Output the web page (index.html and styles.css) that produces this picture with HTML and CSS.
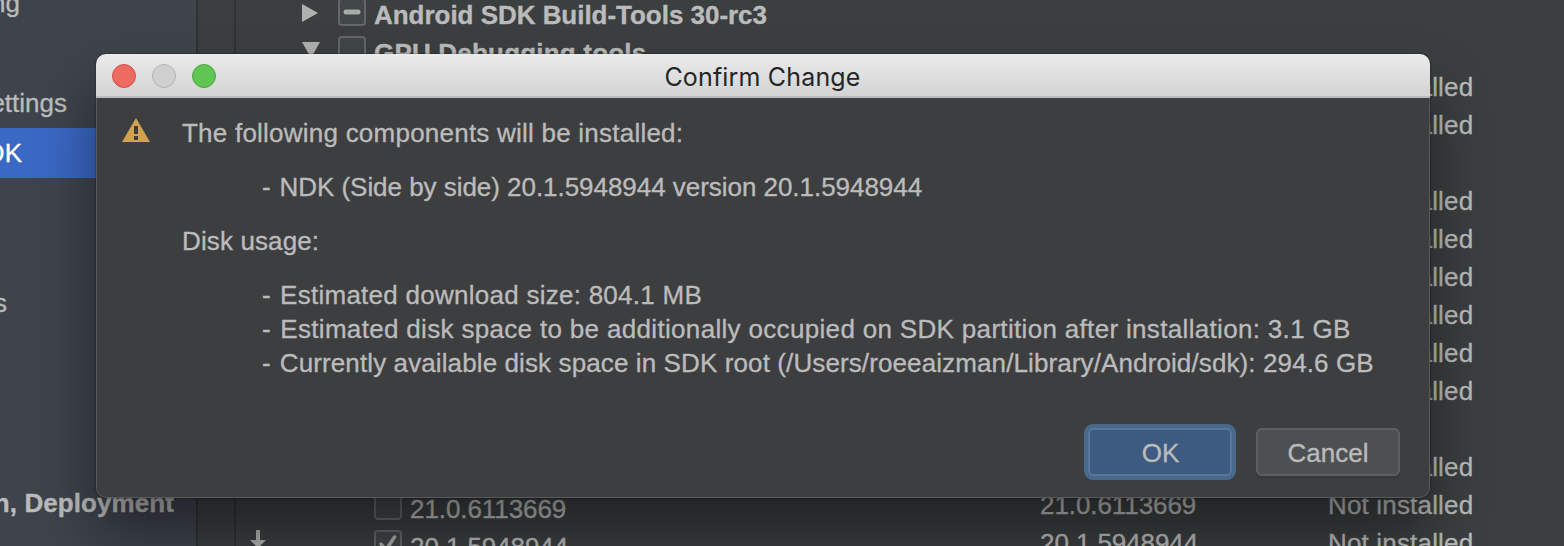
FILE: index.html
```html
<!DOCTYPE html>
<html lang="en">
<head>
<meta charset="utf-8">
<title>Confirm Change</title>
<link rel="stylesheet" href="styles.css">
</head>
<body>
<div class="screen">
  <nav class="sidebar">
    <div class="nav-item first"><span>Updating</span></div>
    <div class="nav-item settings"><span>System Settings</span></div>
    <div class="nav-item selected"><span>Android SDK</span></div>
    <div class="nav-item plain"><span>Path Variables</span></div>
    <div class="nav-item strong"><span>Build, Execution, Deployment</span></div>
  </nav>
  <div class="gutter"></div>
  <main class="table">
    <div class="row">
      <div class="name group"><svg class="arrow" width="18" height="18" viewBox="0 0 18 18"><path d="M0 0L16 9L0 18Z"/></svg><i class="box"><svg width="28" height="28" viewBox="0 0 28 28"><path class="mark" d="M8 14H20" stroke-width="5"/></svg></i><b class="n1">Android SDK Build-Tools 30-rc3</b></div>
    </div>
    <div class="row">
      <div class="name group"><svg class="arrow" width="18" height="18" viewBox="0 0 18 18"><path d="M0 0H18L9 16Z"/></svg><i class="box"></i><b class="n2">GPU Debugging tools</b></div>
    </div>
    <div class="row"><span class="status">Not installed</span></div>
    <div class="row"><span class="status">Not installed</span></div>
    <div class="row"></div>
    <div class="row"><span class="status">Not installed</span></div>
    <div class="row"><span class="status">Not installed</span></div>
    <div class="row"><span class="status">Not installed</span></div>
    <div class="row"><span class="status">Not installed</span></div>
    <div class="row"><span class="status">Not installed</span></div>
    <div class="row"><span class="status">Not installed</span></div>
    <div class="row"></div>
    <div class="row"><span class="status">Not installed</span></div>
    <div class="row">
      <div class="name child"><i class="box"></i><span class="label">21.0.6113669</span></div>
      <span class="version">21.0.6113669</span><span class="status">Not installed</span>
    </div>
    <div class="row">
      <div class="name child"><svg class="download" width="16" height="18" viewBox="0 0 16 18"><path d="M6 0H10V10H16L8 18L0 10H6Z"/></svg><i class="box"><svg width="28" height="28" viewBox="0 0 28 28"><path class="mark" d="M7 14L12 20L20.500 7" stroke-width="3.500"/></svg></i><span class="label">20.1.5948944</span></div>
      <span class="version">20.1.5948944</span><span class="status">Not installed</span>
    </div>
  </main>
  <section class="dialog">
    <header class="titlebar">
      <div class="lights"><i class="red"></i><i class="grey"></i><i class="green"></i></div>
      <h1><span>Confirm Change</span></h1>
    </header>
    <div class="content">
      <svg class="warning" width="28" height="24" viewBox="0 0 28 24"><path fill="#d0a251" d="M14 0L28 24H0Z"/><path fill="#3d3e40" d="M12 8H16V16H12ZM12 18H16V22H12Z"/></svg>
      <div class="message">
        <p><span class="l1">The following components will be installed:</span></p>
        <ul><li><span class="l2"><span class="dash">- </span>NDK (Side by side) 20.1.5948944 version 20.1.5948944</span></li></ul>
        <p><span class="l3">Disk usage:</span></p>
        <ul>
          <li><span class="l4"><span class="dash">- </span>Estimated download size: 804.1 MB</span></li>
          <li><span class="l5"><span class="dash">- </span>Estimated disk space to be additionally occupied on SDK partition after installation: 3.1 GB</span></li>
          <li><span class="l6"><span class="dash">- </span>Currently available disk space in SDK root (/Users/roeeaizman/Library/Android/sdk): 294.6 GB</span></li>
        </ul>
      </div>
    </div>
    <footer class="buttons"><button class="ok">OK</button><button class="cancel">Cancel</button></footer>
  </section>
</div>
</body>
</html>
```
FILE: styles.css
```css
* { box-sizing: border-box; }
body { margin: 0; background: #3b3f40; }
.screen {
  position: relative; display: flex; width: 1564px; height: 546px; overflow: hidden;
  font: 26px/38px "Liberation Sans", Arial, sans-serif; color: #bbb; white-space: nowrap;
  -webkit-text-stroke: .35px currentColor;
}
.sidebar { width: 196px; background: #3e434c; display: flex; flex-direction: column; }
.nav-item { display: flex; justify-content: flex-end; height: 50px; line-height: 50px; flex: none; }
.first { margin-top: -22px; padding-right: 176px; }
.settings { margin-top: 50px; padding-right: 129px; }
.selected { background: #3a68c5; color: #fff; padding-right: 174px; }
.plain { margin-top: 100px; padding-right: 189px; }
.strong { margin-top: 150px; padding-right: 22px; font-weight: bold; letter-spacing: .08px; }
.gutter { width: 40px; border: solid #2f3132; border-width: 0 2px; }
.table { flex: 1; display: flex; flex-direction: column; margin-top: -7px; }
.row { display: grid; grid-template-columns: 804px 288px 1fr; height: 38px; flex: none; }
.name { display: flex; align-items: center; grid-column: 1; height: 38px; }
.group { padding-left: 66px; }
.child { padding-left: 138px; position: relative; }
.version { grid-column: 2; line-height: 37px; letter-spacing: -.08px; }
.status { grid-column: 3; line-height: 37px; letter-spacing: .17px; }
.arrow { fill: #b0b0b0; margin-right: 18px; margin-top: 2px; }
.name b, .label { padding-top: 6px; }
.n1 { letter-spacing: -.03px; }
.n2 { letter-spacing: .2px; }
.label { letter-spacing: -.08px; }
.box { width: 28px; height: 28px; border: 2px solid #656768; border-radius: 4px; background: #414647; margin-right: 8px; flex: none; }
.box svg { display: block; margin: -2px; }
.mark { fill: none; stroke: #aaa; stroke-linecap: round; stroke-linejoin: round; }
.download { position: absolute; left: 14px; top: 5px; fill: #b0b0b0; }
.dialog {
  position: absolute; left: 96px; top: 54px; width: 1334px; height: 444px;
  display: flex; flex-direction: column; overflow: hidden;
  background: #3d3e40; border-radius: 10px;
  box-shadow: 0 0 2px rgba(0,0,0,.6), 0 34px 60px rgba(0,0,0,.45);
}
.dialog::after { content: ""; position: absolute; inset: 44px 0 0; border: 1px solid #58595b; border-top: 0; border-radius: 0 0 10px 10px; pointer-events: none; }
.titlebar { height: 44px; flex: none; display: flex; align-items: center; background: linear-gradient(#ebebeb, #d3d3d3); border-bottom: 2px solid #bcbdbe; }
.lights { display: flex; gap: 16px; padding-left: 16px; width: 160px; margin-top: 2px; }
.lights i { width: 24px; height: 24px; border-radius: 50%; border: 1px solid; }
.red { background: #ed6b60; border-color: #d35047 !important; }
.grey { background: #d0d0d0; border-color: #b2b2b2 !important; }
.green { background: #61c554; border-color: #4da73d !important; }
h1 { margin: 3px 161px 0 0; flex: 1; text-align: center; font: 400 25px/40px Inter, Roboto, sans-serif; color: #262626; -webkit-text-stroke: 0; letter-spacing: .17px; }
.content { display: flex; padding: 18px 26px 0; flex: 1; }
.warning { margin-top: 2px; margin-right: 32px; flex: none; }
.message { line-height: 34px; }
.dash { margin-right: 1.7px; }
.l1 { letter-spacing: .23px; }
.l2 { letter-spacing: -.04px; }
.l3 { letter-spacing: .12px; }
.l4 { letter-spacing: .26px; }
.l5 { letter-spacing: .325px; }
.l6 { letter-spacing: .11px; }
p { margin: 0; }
ul { list-style: none; margin: 20px 0; padding: 0 0 0 80px; }
.buttons { display: flex; justify-content: flex-end; gap: 20px; padding: 0 30px 18px 0; }
button { font: inherit; color: #bbb; height: 56px; padding: 2px 0 0; -webkit-text-stroke: .35px currentColor; }
.ok { width: 152px; border: 4px solid #4a6a8d; border-radius: 9px; background: #3d5a80; box-shadow: inset 0 0 0 2px #587799; padding-left: 1px; }
.cancel { width: 144px; height: 48px; margin-top: 4px; border: 2px solid #5e6060; border-radius: 6px; background: #4c5052; box-shadow: 0 3px 0 #38393b; }
```
